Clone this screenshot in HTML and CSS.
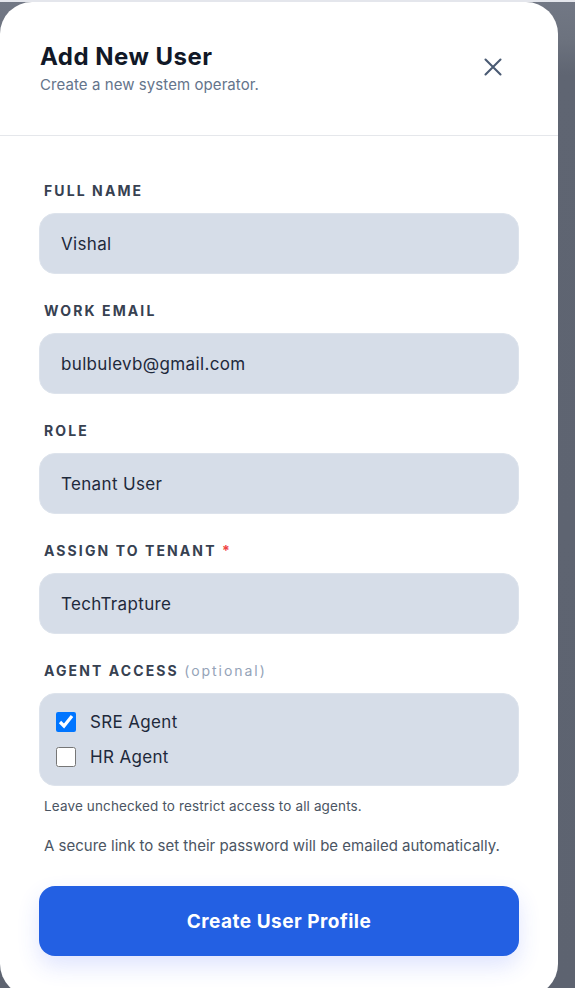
FILE: index.html
```html
<!DOCTYPE html>
<html lang="en">
<head>
<meta charset="utf-8">
<title>Add New User</title>
<link rel="stylesheet" href="styles.css">
</head>
<body>
<div class="topline"></div>
<div class="modal">
  <div class="modal-header">
    <div class="heading">
      <h1 class="title">Add New User</h1>
      <p class="subtitle">Create a new system operator.</p>
    </div>
    <button class="close" type="button" aria-label="Close">
      <svg width="18" height="18" viewBox="0 0 18 18" fill="none" stroke="#4a5b73" stroke-width="2.1" stroke-linecap="round">
        <path d="M1.5 1.5 16.5 16.5M16.5 1.5 1.5 16.5"/>
      </svg>
    </button>
  </div>
  <form class="modal-body">
    <div class="field">
      <label class="label">Full Name</label>
      <div class="input">Vishal</div>
    </div>
    <div class="field">
      <label class="label">Work Email</label>
      <div class="input">bulbulevb@gmail.com</div>
    </div>
    <div class="field">
      <label class="label">Role</label>
      <div class="input">Tenant User</div>
    </div>
    <div class="field">
      <label class="label">Assign to Tenant <span class="req">*</span></label>
      <div class="input">TechTrapture</div>
    </div>
    <div class="field">
      <label class="label">Agent Access <span class="opt">(optional)</span></label>
      <div class="agents">
        <label class="agent"><input type="checkbox" checked> <span>SRE Agent</span></label>
        <label class="agent"><input type="checkbox"> <span>HR Agent</span></label>
      </div>
      <p class="hint">Leave unchecked to restrict access to all agents.</p>
    </div>
    <p class="note">A secure link to set their password will be emailed automatically.</p>
    <button class="submit" type="button">Create User Profile</button>
  </form>
</div>
</body>
</html>
```
FILE: styles.css
```css
* { box-sizing: border-box; }
html, body { margin: 0; padding: 0; }
body {
  height: 988px;
  overflow: hidden;
  font-family: Inter, "Noto Sans", sans-serif;
  background: linear-gradient(180deg, #727885 0px, #6c727e 40px, #5f6572 75px, #5d6370 100%);
}
.topline {
  height: 2px;
  background: #e4e6ec;
}
.modal {
  width: 558px;
  background: #ffffff;
  border-radius: 32px;
  padding-bottom: 40px;
}
.modal-header {
  display: flex;
  justify-content: space-between;
  align-items: flex-start;
  padding: 39px 40px 40px 40px;
  border-bottom: 1px solid #e5e7eb;
}
.title {
  margin: 0;
  font-size: 24px;
  line-height: 32px;
  font-weight: 700;
  color: #111827;
  letter-spacing: 0.02em;
}
.subtitle {
  margin: 2px 0 0 0;
  font-size: 15px;
  line-height: 20px;
  letter-spacing: 0.005em;
  color: #64748b;
}
.close {
  width: 36px;
  height: 36px;
  margin: 8px 7px 0 0;
  padding: 0;
  border: 0;
  background: transparent;
  display: flex;
  align-items: center;
  justify-content: center;
}
.modal-body {
  margin: 0;
  padding: 45px 39px 0 39px;
  display: flex;
  flex-direction: column;
}
.field {
  display: flex;
  flex-direction: column;
  margin-bottom: 27px;
}
.field:last-of-type { margin-bottom: 0; }
.label {
  display: block;
  padding-left: 5px;
  margin-bottom: 12px;
  font-size: 14px;
  line-height: 20px;
  font-weight: 700;
  text-transform: uppercase;
  letter-spacing: 0.15em;
  color: #374151;
}
.req { color: #ef4444; font-weight: 700; }
.opt {
  text-transform: none;
  font-weight: 400;
  color: #94a3b8;
  letter-spacing: 0.14em;
}
.input {
  height: 61px;
  display: flex;
  align-items: center;
  padding: 0 21px;
  background: #d6dde8;
  border: 1px solid #dde3ec;
  border-radius: 16px;
  font-size: 17px;
  letter-spacing: 0.02em;
  color: #1e293b;
}
.agents {
  display: flex;
  flex-direction: column;
  gap: 15px;
  padding: 18px 16px;
  background: #d6dde8;
  border: 1px solid #dde3ec;
  border-radius: 16px;
}
.agent {
  display: flex;
  align-items: center;
  gap: 14px;
  height: 20px;
  font-size: 17px;
  letter-spacing: 0.02em;
  color: #1e293b;
}
.agent input {
  width: 20px;
  height: 20px;
  margin: 0;
}
.hint {
  margin: 10px 0 0 0;
  padding-left: 5px;
  font-size: 13.5px;
  letter-spacing: 0.01em;
  line-height: 20px;
  color: #4b5563;
}
.note {
  margin: 20px 0 0 0;
  padding-left: 5px;
  font-size: 15px;
  line-height: 20px;
  color: #4b5563;
}
.submit {
  margin-top: 30px;
  height: 70px;
  width: 100%;
  border: 0;
  border-radius: 16px;
  background: #2360e3;
  color: #ffffff;
  font-family: Inter, "Noto Sans", sans-serif;
  font-size: 19px;
  font-weight: 700;
  letter-spacing: 0.5px;
  box-shadow: 0 10px 22px rgba(59, 90, 246, 0.16);
}
```
